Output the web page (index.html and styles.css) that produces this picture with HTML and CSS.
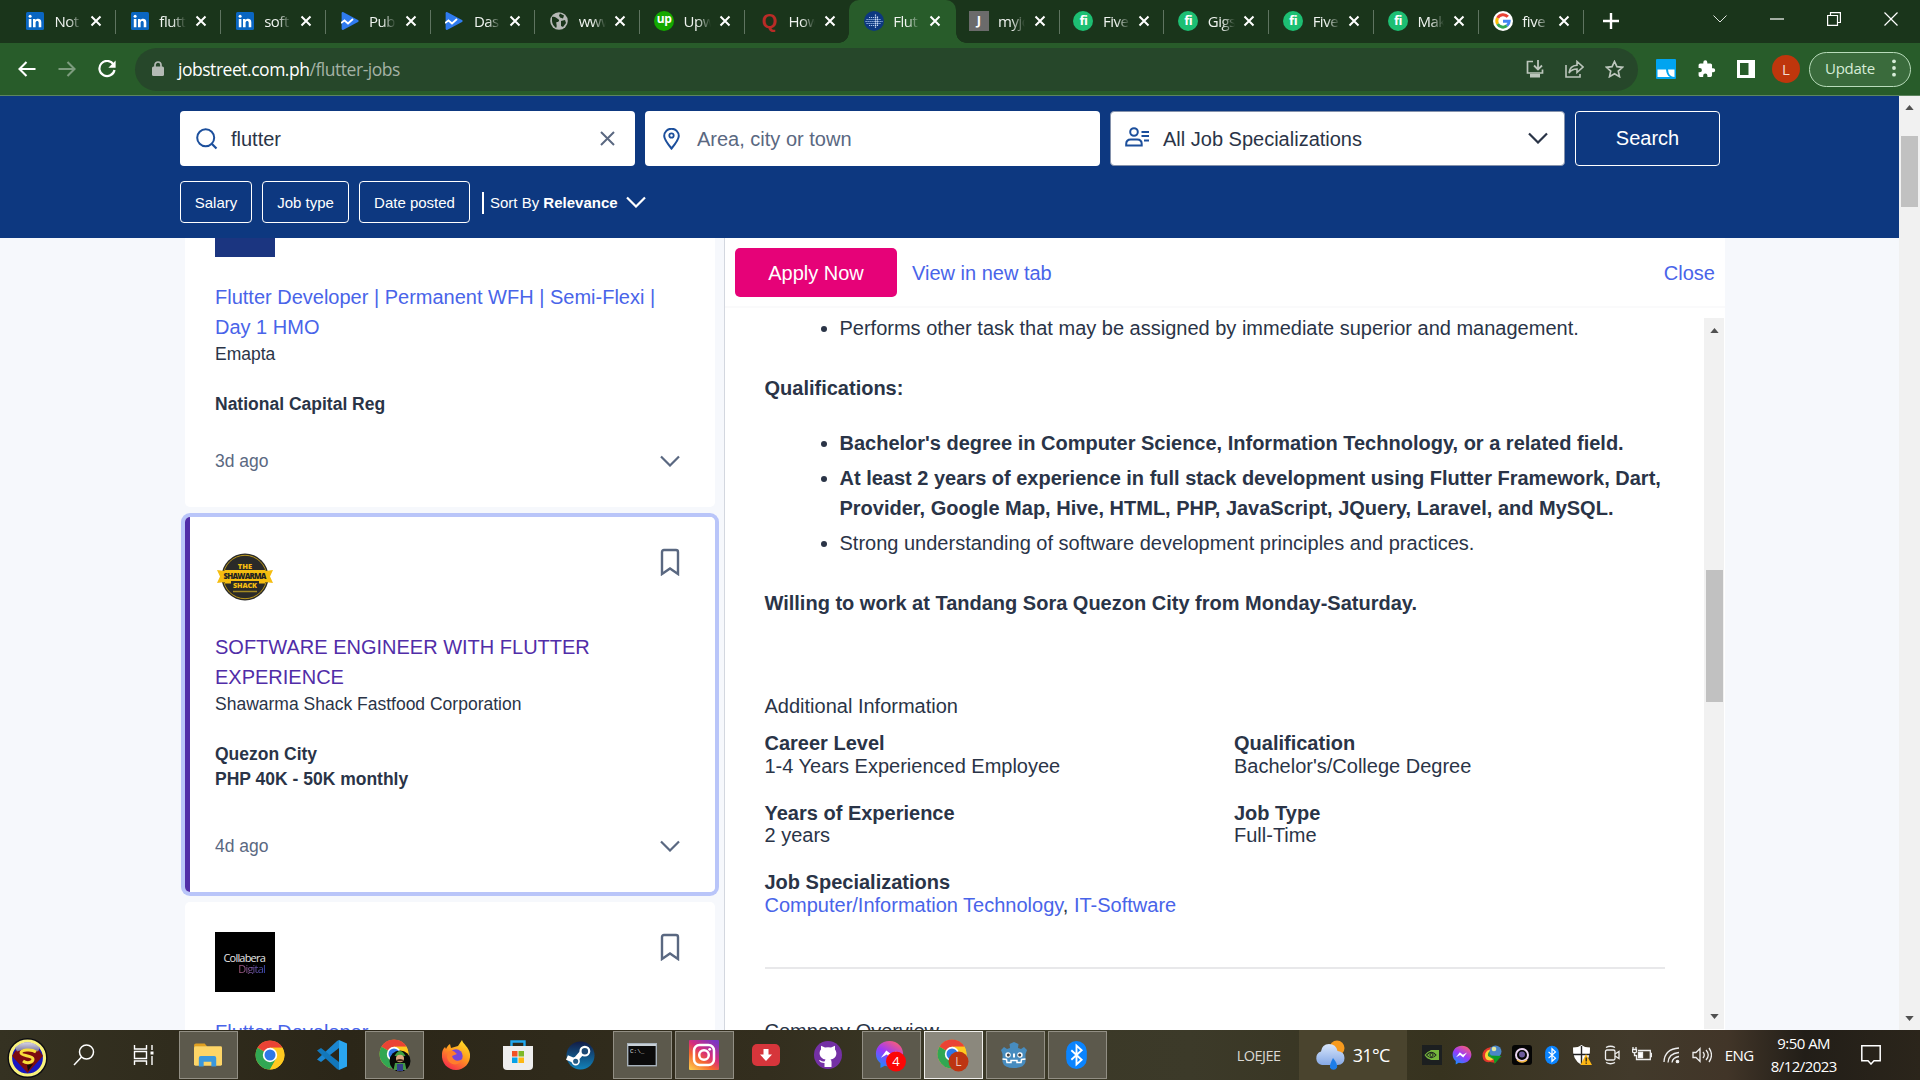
FILE: index.html
```html
<!DOCTYPE html>
<html lang="en">
<head>
<meta charset="utf-8">
<title>Flutter Jobs</title>
<link rel="stylesheet" href="styles.css">
</head>
<body>
<svg class="defs" width="0" height="0">
  <defs>
    <linearGradient id="fox" x1="0.8" y1="0" x2="0.2" y2="1"><stop offset="0" stop-color="#ffe226"/><stop offset=".45" stop-color="#ff9a1f"/><stop offset="1" stop-color="#f5234f"/></linearGradient>
    <linearGradient id="insta" x1="0.1" y1="1" x2="0.8" y2="0"><stop offset="0" stop-color="#fdc94c"/><stop offset=".35" stop-color="#f5662f"/><stop offset=".6" stop-color="#d62d7c"/><stop offset="1" stop-color="#7a36c4"/></linearGradient>
    <linearGradient id="msgr" x1="0.2" y1="1" x2="0.8" y2="0"><stop offset="0" stop-color="#1490ff"/><stop offset=".5" stop-color="#9a38fb"/><stop offset="1" stop-color="#ff6070"/></linearGradient>
    <linearGradient id="steam" x1="0" y1="0" x2="0" y2="1"><stop offset="0" stop-color="#131c45"/><stop offset="1" stop-color="#1183bb"/></linearGradient>
    <linearGradient id="cloud" x1="0" y1="0" x2="0" y2="1"><stop offset="0" stop-color="#d8e6fb"/><stop offset="1" stop-color="#86a9e6"/></linearGradient>
    <linearGradient id="shine" x1="0" y1="0" x2="0" y2="1"><stop offset="0" stop-color="#d9d6e6"/><stop offset="1" stop-color="#77749a"/></linearGradient>
    <symbol id="x" viewBox="0 0 12 12"><path d="M1.5 1.5l9 9m0-9l-9 9" stroke="currentColor" stroke-width="2" fill="none"/></symbol>
    <symbol id="in" viewBox="0 0 18 18"><rect width="18" height="18" rx="1.5" fill="#0a66c2"/><path d="M2.8 7h2.6v8.2H2.800zM7 7h2.500v1.200c1.400-2.200 5.800-2 5.800 2v5h-2.600v-4.500c0-2.400-3.100-2.200-3.100 0v4.500H7z" fill="#fff"/><circle cx="4.100" cy="4.300" r="1.500" fill="#fff"/></symbol>
    <symbol id="pub" viewBox="0 0 18 18"><path d="M2.500.3Q.6-.4.600 1.500v15q0 1.900 1.900 1.200L17 10q1.300-1 0-2z" fill="#2f7bf0"/><path d="M0 11l3.500-2.500 3.500 3 5-4.500" fill="none" stroke="#fff" stroke-width="1.800"/></symbol>
    <symbol id="globe" viewBox="0 0 18 18"><circle cx="9" cy="9" r="8.800" fill="#b5b8b5"/><path d="M2 5c3-1 4 1 6 2s1 3-1 3 1 4-1 6c-2-2-4-4-4-7zM10 1.500l4 2-1 3-3-1-1-2zM11 9l4-1 1 3-3 4-2-1z" fill="#1a351b"/></symbol>
    <symbol id="chrome" viewBox="0 0 48 48"><circle cx="24" cy="24" r="23" fill="#ffca20"/><path d="M24 24L4 12.500A23 23 0 0 1 44 12.500H24z" fill="#ea4335"/><path d="M4 12.500A23 23 0 0 0 24 47l10-17.500L24 24z" fill="#31a753"/><path d="M44 12.500H24V24l10 5.500L24 47A23 23 0 0 0 44 12.500z" fill="#ffca20"/><circle cx="24" cy="24" r="11.500" fill="#fff"/><circle cx="24" cy="24" r="8.800" fill="#2f78e8"/></symbol>
    <symbol id="chev" viewBox="0 0 20 12"><path d="M1 1.500l9 9 9-9" fill="none" stroke="currentColor" stroke-width="2.200"/></symbol>
    <symbol id="mark" viewBox="0 0 20 28"><path d="M2 26V4Q2 2 4 2h12q2 0 2 2v22l-8-5.500z" fill="none" stroke="currentColor" stroke-width="2.400"/></symbol>
    <symbol id="bt" viewBox="0 0 24 32"><rect x="1" y="1" width="22" height="30" rx="11" fill="#0a84ff"/><path d="M6.500 11l11 10-5.500 5V6l5.500 5-11 10" fill="none" stroke="#fff" stroke-width="2"/></symbol>
    <symbol id="messenger" viewBox="0 0 32 32"><path d="M16 1C7 1 1 7.200 1 15.300c0 4.500 1.800 8 5 10.400V31l4.800-2.600c1.600.5 3.400.7 5.200.7 9 0 15-6.200 15-13.800S25 1 16 1z" fill="url(#msgr)"/><path d="M6.500 19.500l6-8 5 4 6.500-3.500-6 8-5-4z" fill="#fff"/></symbol>
    <symbol id="wv" viewBox="0 0 10 6"><path d="M0 6L5 0l5 6z" fill="#505050"/></symbol>
  </defs>
</svg>

<div class="tabs">
  <div class="tab"><svg class="fav"><use href="#in"/></svg><span>Not</span><svg class="tx"><use href="#x"/></svg></div>
  <div class="tab"><svg class="fav"><use href="#in"/></svg><span>flutt</span><svg class="tx"><use href="#x"/></svg></div>
  <div class="tab"><svg class="fav"><use href="#in"/></svg><span>soft</span><svg class="tx"><use href="#x"/></svg></div>
  <div class="tab"><svg class="fav"><use href="#pub"/></svg><span>Pub</span><svg class="tx"><use href="#x"/></svg></div>
  <div class="tab"><svg class="fav"><use href="#pub"/></svg><span>Das</span><svg class="tx"><use href="#x"/></svg></div>
  <div class="tab"><svg class="fav"><use href="#globe"/></svg><span>www</span><svg class="tx"><use href="#x"/></svg></div>
  <div class="tab"><b class="fav dot up">up</b><span>Upw</span><svg class="tx"><use href="#x"/></svg></div>
  <div class="tab nosep"><b class="fav quora">Q</b><span>How</span><svg class="tx"><use href="#x"/></svg></div>
  <div class="tab active nosep"><svg class="fav" viewBox="0 0 20 20"><circle cx="10" cy="10" r="10" fill="#0d3880"/><path d="M2.500 8.500H17M1.500 10.500H18.500M2.500 12.500H17M5 6.500h9M5 14.500h9" stroke="#a9c3ef" stroke-width="1.100" stroke-dasharray="1.200 .8"/><path d="M11.500 3.500v14M13.500 5.500v10" stroke="#dbe6fa" stroke-width="1.200" stroke-dasharray="1.200 .8"/></svg><span>Flut</span><svg class="tx"><use href="#x"/></svg></div>
  <div class="tab"><b class="fav jay">J</b><span>myjo</span><svg class="tx"><use href="#x"/></svg></div>
  <div class="tab"><b class="fav dot fi">fi</b><span>Five</span><svg class="tx"><use href="#x"/></svg></div>
  <div class="tab"><b class="fav dot fi">fi</b><span>Gigs</span><svg class="tx"><use href="#x"/></svg></div>
  <div class="tab"><b class="fav dot fi">fi</b><span>Five</span><svg class="tx"><use href="#x"/></svg></div>
  <div class="tab"><b class="fav dot fi">fi</b><span>Mak</span><svg class="tx"><use href="#x"/></svg></div>
  <div class="tab"><svg class="fav big" viewBox="0 0 20 20"><circle cx="10" cy="10" r="10" fill="#fff"/><g fill="none" stroke-width="3"><path d="M14.800 5.800A6.200 6.200 0 0 0 4.600 7" stroke="#ea4335"/><path d="M4.600 7a6.200 6.200 0 0 0 0 6" stroke="#fbbc05"/><path d="M4.600 13a6.200 6.200 0 0 0 9.400 1.700" stroke="#34a853"/><path d="M14 14.700a6.200 6.200 0 0 0 2.200-4.500H10" stroke="#4285f4"/></g></svg><span>five</span><svg class="tx"><use href="#x"/></svg></div>
  <svg class="plus" viewBox="0 0 16 16"><path d="M8 0v16M0 8h16" stroke="#fff" stroke-width="2.400"/></svg>
  <div class="winctl">
    <svg width="14" height="8" viewBox="0 0 14 8"><path d="M.5.5L7 7 13.500.5" fill="none" stroke="#dfe5df"/></svg>
    <svg width="14" height="14" viewBox="0 0 14 14"><path d="M0 7h14" stroke="#fff" stroke-width="1.200"/></svg>
    <svg width="14" height="14" viewBox="0 0 14 14"><path d="M.6 3.500h9.900v9.900H.6zM3.500 3V.6h9.900v9.900H11" fill="none" stroke="#fff" stroke-width="1.200"/></svg>
    <svg width="14" height="14" viewBox="0 0 14 14"><path d="M.5.5l13 13m0-13l-13 13" stroke="#fff" stroke-width="1.200"/></svg>
  </div>
</div>

<div class="toolbar">
  <svg width="18" height="16" viewBox="0 0 18 16"><path d="M17.500 8H2M8.500 1L1.500 8l7 7" fill="none" stroke="#fff" stroke-width="2.100"/></svg>
  <svg width="18" height="16" viewBox="0 0 18 16"><path d="M.5 8H16M9.500 1l7 7-7 7" fill="none" stroke="#7d9c7e" stroke-width="2.100"/></svg>
  <svg width="18" height="18" viewBox="0 0 18 18"><path d="M15.500 4.500A7.600 7.600 0 1 0 16.500 10" fill="none" stroke="#fff" stroke-width="2.200"/><path d="M17.600.5v7.200h-7.200z" fill="#fff"/></svg>
  <div class="omni">
    <svg width="12" height="16" viewBox="0 0 12 16"><rect y="5.500" width="12" height="9.500" rx="1.500" fill="#b4bab5"/><path d="M3 6V4a3 3 0 0 1 6 0v2" fill="none" stroke="#b4bab5" stroke-width="1.700"/></svg>
    <div class="url">jobstreet.com.ph<i>/flutter-jobs</i></div>
    <svg width="18" height="18" viewBox="0 0 18 18"><path d="M7 1.500H1.500V13h15V9.500" fill="none" stroke="#bcc6bc" stroke-width="1.700"/><path d="M4 14h10v3.500H4z" fill="#bcc6bc"/><path d="M12 0v9M8 5.500l4 4 4-4" fill="none" stroke="#bcc6bc" stroke-width="1.800"/></svg>
    <svg width="19" height="18" viewBox="0 0 19 18"><path d="M1 5v12h14v-3M4 13c.5-5 3.500-7.500 8-7.700V1.500L18 7l-6 5.500V9C8.500 9 6 10 4 13z" fill="none" stroke="#bcc6bc" stroke-width="1.600"/></svg>
    <svg width="19" height="18" viewBox="0 0 19 18"><path d="M9.500 1.500l2.400 5.200 5.600.6-4.200 3.800 1.200 5.600-5-2.900-5 2.900 1.200-5.600L1.500 7.300l5.600-.6z" fill="none" stroke="#bcc6bc" stroke-width="1.700"/></svg>
  </div>
  <svg class="e1" width="20" height="20" viewBox="0 0 20 20"><rect width="20" height="20" rx="1" fill="#00a4f0"/><path d="M1.500 10.500H10q.5 6 4 7.500H1.500zM12 10.500h6.500V18q-6 0-6.500-7.500z" fill="#fff"/></svg>
  <svg class="e2" width="19" height="20" viewBox="0 0 24 24"><path d="M20.500 11H19V7a2 2 0 0 0-2-2h-4V3.500a2.500 2.500 0 0 0-5 0V5H4a2 2 0 0 0-2 2v3.800h1.500a2.700 2.700 0 0 1 0 5.400H2V20a2 2 0 0 0 2 2h3.800v-1.500a2.700 2.700 0 0 1 5.400 0V22H17a2 2 0 0 0 2-2v-4h1.500a2.500 2.500 0 0 0 0-5z" fill="#fff"/></svg>
  <svg class="e3" width="18" height="18" viewBox="0 0 18 18"><path d="M0 0h18v18H0zM3 3v12h8.500V3z" fill="#fff" fill-rule="evenodd"/></svg>
  <div class="avatar">L</div>
  <div class="update">Update<svg width="4" height="18" viewBox="0 0 4 18"><circle cx="2" cy="2.300" r="1.900" fill="#d6ecd7"/><circle cx="2" cy="9" r="1.900" fill="#d6ecd7"/><circle cx="2" cy="15.700" r="1.900" fill="#d6ecd7"/></svg></div>
</div>

<div class="page">
  <div class="content">
    <header class="search">
      <div class="fields">
        <div class="field"><svg width="22" height="22" viewBox="0 0 22 22"><circle cx="9.700" cy="9.700" r="8.500" fill="none" stroke="#1c4f9c" stroke-width="2"/><path d="M16 16l4.500 4.500" stroke="#1c4f9c" stroke-width="2.200"/></svg><span class="val">flutter</span><svg class="clear" width="15" height="15" viewBox="0 0 15 15"><path d="M1 1l13 13M14 1L1 14" stroke="#5a6881" stroke-width="2"/></svg></div>
        <div class="field loc"><svg width="17" height="22" viewBox="0 0 17 22"><path d="M8.500 20.500C4 15 1.200 11.500 1.200 8a7.300 7.300 0 0 1 14.600 0c0 3.500-2.800 7-7.300 12.500z" fill="none" stroke="#1c4f9c" stroke-width="2"/><circle cx="8.500" cy="7.500" r="2.200" fill="none" stroke="#1c4f9c" stroke-width="1.800"/></svg><span class="val hint">Area, city or town</span></div>
        <div class="field spec"><svg width="25" height="20" viewBox="0 0 25 20"><g fill="none" stroke="#1c4f9c" stroke-width="2"><circle cx="9" cy="5" r="3.800"/><path d="M1.200 18.500v-1.500q0-4.500 4.500-4.500h6.500q4.500 0 4.500 4.500v1.500zM16.500 5H24M16.500 9H24M19 13.500h5"/></g></svg><span class="val">All Job Specializations</span><svg width="20" height="12" class="dark"><use href="#chev"/></svg></div>
        <div class="go">Search</div>
      </div>
      <div class="filters">
        <span class="pill p1">Salary</span><span class="pill p2">Job type</span><span class="pill p3">Date posted</span><i class="bar"></i><span class="sort">Sort By <b>Relevance</b></span><svg width="20" height="12"><use href="#chev"/></svg>
      </div>
    </header>
    <main>
      <div class="list">
        <article class="card c1"><div class="logo navy"></div><h3>Flutter Developer | Permanent WFH | Semi-Flexi | Day 1 HMO</h3><p>Emapta</p><div class="meta"><b>National Capital Reg</b></div><footer>3d ago<svg width="20" height="12"><use href="#chev"/></svg></footer></article>
        <article class="card c2"><div class="top"><svg class="logo" viewBox="0 0 60 60"><circle cx="30" cy="30" r="23.500" fill="#2a2a28"/><circle cx="30" cy="30" r="21.700" fill="none" stroke="#b9961c" stroke-width="1"/><path d="M2 23l8 1V23h40v1l8-1-3 6.500 3 6.500-8-1v1.500H10V35l-8 1 3-6.500z" fill="#f5bd10"/><rect x="16" y="34" width="28" height="7" fill="#2a2a28"/><g font-family="Open Sans, sans-serif" font-weight="800" text-anchor="middle"><text x="30" y="22" font-size="7.500" fill="#f5bd10">THE</text><text x="30" y="32" font-size="7.800" fill="#222" textLength="43">SHAWARMA</text><text x="30" y="40.500" font-size="7.200" fill="#f5bd10" textLength="24">SHACK</text></g><path d="M18 44.500h24" stroke="#a38922" stroke-width="1.500"/></svg><svg class="mark" width="20" height="28"><use href="#mark"/></svg></div><h3>SOFTWARE ENGINEER WITH FLUTTER EXPERIENCE</h3><p>Shawarma Shack Fastfood Corporation</p><div class="meta"><b>Quezon City</b><b>PHP 40K - 50K monthly</b></div><footer>4d ago<svg width="20" height="12"><use href="#chev"/></svg></footer></article>
        <article class="card c3"><div class="top"><div class="logo black"><span>Collabera</span><em>Digital</em></div><svg class="mark" width="20" height="28"><use href="#mark"/></svg></div><h3>Flutter Developer</h3></article>
      </div>
      <section class="detail">
        <div class="dhead"><span class="apply">Apply Now</span><a>View in new tab</a><a class="close">Close</a></div>
        <div class="dbody">
          <div class="text">
            <ul><li>Performs other task that may be assigned by immediate superior and management.</li></ul>
            <p class="bold q">Qualifications:</p>
            <ul><li class="bold">Bachelor's degree in Computer Science, Information Technology, or a related field.</li><li class="bold">At least 2 years of experience in full stack development using Flutter Framework, Dart, Provider, Google Map, Hive, HTML, PHP, JavaScript, JQuery, Laravel, and MySQL.</li><li>Strong understanding of software development principles and practices.</li></ul>
            <p class="bold w">Willing to work at Tandang Sora Quezon City from Monday-Saturday.</p>
            <h4>Additional Information</h4>
            <div class="info">
              <div><b>Career Level</b>1-4 Years Experienced Employee</div><div><b>Qualification</b>Bachelor's/College Degree</div>
              <div><b>Years of Experience</b>2 years</div><div><b>Job Type</b>Full-Time</div>
              <div><b>Job Specializations</b><span><a>Computer/Information Technology</a>, <a>IT-Software</a></span></div>
            </div>
            <h4 class="co">Company Overview</h4>
          </div>
          <div class="sb inner"><svg><use href="#wv"/></svg><i></i><svg class="dn"><use href="#wv"/></svg></div>
        </div>
      </section>
    </main>
  </div>
  <div class="sb outer"><svg><use href="#wv"/></svg><i></i><svg class="dn"><use href="#wv"/></svg></div>
</div>

<div class="taskbar">
  <div class="start"><svg width="41" height="40" viewBox="0 0 41 40"><circle cx="20.500" cy="20" r="20" fill="#0c0c12"/><circle cx="20.500" cy="20" r="17" fill="#1717c0" stroke="#f8f27c" stroke-width="3.200"/><path d="M10 11h21l5 7-15.500 17L5 18z" fill="#7c0d10"/><path d="M8 9.500Q20.500-1 33 9.500l-2 4q-10-5-21 0z" fill="url(#shine)"/><path d="M29 14c-5-3.500-15-2-15 1s12 2.500 12 6-6 5-10 2" fill="none" stroke="#f7de3a" stroke-width="3"/><path d="M20 27l1 6 5-7z" fill="#140a0a"/></svg></div>
  <div class="find"><svg width="22" height="22" viewBox="0 0 22 22"><circle cx="13.500" cy="8" r="7" fill="none" stroke="#fff" stroke-width="1.500"/><path d="M8.500 13L1 21" stroke="#fff" stroke-width="1.500"/></svg></div>
  <div class="view"><svg width="22" height="20" viewBox="0 0 22 20"><path d="M1.500 0v4h12V0M1.500 20v-4h12v4M1.500 6.500h12v7h-12zM19 0v5M19 11v9" fill="none" stroke="#fff" stroke-width="1.400"/><path d="M17.500 6.500h3v3h-3z" fill="#fff"/></svg></div>
  <div class="app on"><svg width="28" height="25" viewBox="0 0 29 25"><path d="M0 2q0-2 2-2h9l3 3.500H0z" fill="#e0a021"/><rect y="3" width="29" height="20" rx="1.500" fill="#fdd567"/><path d="M5 24V15q0-2 2-2h14q2 0 2 2v9h-5v-5h-8v5z" fill="#3a98dd"/></svg></div>
  <div class="app"><svg width="30" height="30"><use href="#chrome"/></svg></div>
  <div class="app"><svg width="30" height="30" viewBox="0 0 30 30"><path d="M22 0l8 3.500v23L22 30z" fill="#2aa5f0"/><path d="M22 0v8L4 22 0 19.500 20 1z" fill="#1b86d0"/><path d="M22 30v-8L4 8 0 10.500 20 29z" fill="#1277bb"/></svg></div>
  <div class="app on"><svg width="34" height="34" viewBox="0 0 34 34"><use href="#chrome" x="2" y="1" width="30" height="30"/><ellipse cx="23" cy="23" rx="10.500" ry="10.500" fill="#080a08"/><path d="M17.500 18q5.500-10 11 0z" fill="#3da042"/><ellipse cx="23" cy="20.500" rx="4" ry="3.700" fill="#dba97e"/><path d="M19.500 22q3.500-2 7 0v1.300h-7z" fill="#442718"/><path d="M18 25h10l1.500 7h-13z" fill="#449746"/><path d="M20 26h6v7h-6z" fill="#33418b"/></svg></div>
  <div class="app"><svg width="30" height="30" viewBox="0 0 30 30"><path d="M17 6l4-6c1 4 7 7 8 14 1 9-6 16-14 16S0 23 1 14c0-3 1-5 3-7l1 2c1-2 2-4 4-5l1 4z" fill="url(#fox)"/><circle cx="15" cy="16" r="6.700" fill="#7545d9"/><path d="M7 12c4-3 7 0 9 2l-5 2c1 5 7 6 10 3-2 8-14 7-15-2z" fill="#ff7d2c"/></svg></div>
  <div class="app"><svg width="30" height="30" viewBox="0 0 30 30"><path d="M8.500 7V1.500h13V7" fill="none" stroke="#20a8ef" stroke-width="2.400"/><path d="M0 6h30v20q0 4-4 4H4q-4 0-4-4z" fill="#eee"/><path d="M9 11h5.500v5.500H9z" fill="#f05125"/><path d="M15.500 11H21v5.500h-5.500z" fill="#7db928"/><path d="M9 17.500h5.500V23H9z" fill="#05a2e8"/><path d="M15.500 17.500H21V23h-5.500z" fill="#fdb813"/></svg></div>
  <div class="app"><svg width="29" height="29" viewBox="0 0 30 30"><circle cx="15" cy="15" r="14.500" fill="url(#steam)"/><path d="M1 17l8 3.500 7-8" fill="none" stroke="#fff" stroke-width="5"/><circle cx="19.500" cy="10.500" r="4.500" fill="#1c4873" stroke="#fff" stroke-width="2.300"/><circle cx="10" cy="21" r="3.500" fill="#245b84" stroke="#fff" stroke-width="1.700"/></svg></div>
  <div class="app on"><svg width="30" height="24" viewBox="0 0 30 24"><rect x=".7" y=".7" width="28.600" height="22" fill="#0b0b0b" stroke="#a7b2bb" stroke-width="1.400"/><path d="M1 1h28v2H1z" fill="#c8d0d6"/><text x="3" y="10" font-size="6" fill="#ddd" font-family="Liberation Mono, monospace">C:\_</text></svg></div>
  <div class="app on"><svg width="30" height="30" viewBox="0 0 30 30"><rect width="30" height="30" rx="1" fill="url(#insta)"/><g fill="none" stroke="#fff" stroke-width="2.500"><rect x="5" y="5" width="20" height="20" rx="5.500"/><circle cx="15" cy="15" r="4.800"/></g><circle cx="20.700" cy="9.300" r="1.400" fill="#fff"/></svg></div>
  <div class="app"><svg width="28" height="22" viewBox="0 0 28 22"><rect width="28" height="22" rx="5" fill="#d6353b"/><path d="M11.500 5h5v5.500H20L14 17l-6-6.500h3.500z" fill="#fff"/></svg></div>
  <div class="app"><svg width="28" height="28" viewBox="0 0 28 28"><circle cx="14" cy="14" r="14" fill="#7430a5"/><path d="M10.500 26v-4c-3-.2-5-1-5.500-3 2 0 2 2 5.500 1.500l1-2C5 17.500 4.500 11 7 8.500V4.700l4 1.800q3-.7 6 0l4-1.800v3.800c2.500 3 2 9-4.500 10 1.500 1 1 4 1 7.500z" fill="#fff"/></svg></div>
  <div class="app on"><svg width="34" height="34" viewBox="0 0 34 34"><use href="#messenger" x="2" y="2" width="29" height="29"/><circle cx="23" cy="23.500" r="10" fill="#fb0606"/><text x="23" y="28" font-size="13" fill="#fff" text-anchor="middle" font-family="Open Sans, sans-serif">4</text></svg></div>
  <div class="app cur"><svg width="34" height="34" viewBox="0 0 34 34"><use href="#chrome" x="2" y="1" width="30" height="30"/><circle cx="23.500" cy="23.500" r="10" fill="#bd3512"/><text x="23.500" y="28" font-size="12" fill="#e8c7bc" text-anchor="middle" font-family="Open Sans, sans-serif">L</text></svg></div>
  <div class="app on"><svg width="28" height="28" viewBox="0 0 28 28"><path d="M1 9l3-3 3 2 3-1-.5-4L14 1l4.500 2L18 7l3 1 3-2 3 3-1.500 4v8Q24 27 14 27T2.500 21v-8z" fill="#478cbf"/><path d="M2.500 18l4 .5.500 3h4v-2h6v2h4l.500-3 4-.5" fill="none" stroke="#fff" stroke-width="1.500"/><circle cx="8" cy="14" r="2.700" fill="#fff"/><circle cx="20" cy="14" r="2.700" fill="#fff"/><circle cx="8.300" cy="14" r="1.500" fill="#414042"/><circle cx="19.700" cy="14" r="1.500" fill="#414042"/><path d="M14 12.500v4" stroke="#fff" stroke-width="2"/></svg></div>
  <div class="app on"><svg width="23" height="30"><use href="#bt"/></svg></div>
  <div class="tray">
    <span class="user">LOEJEE</span>
    <div class="weather"><svg width="32" height="32" viewBox="0 0 32 32"><circle cx="23" cy="9" r="7.500" fill="#f79a1e"/><path d="M8 26a7 7 0 0 1-1-13.500Q8 5 15 5t8.500 7q7 .5 7 7t-7 7z" fill="url(#cloud)"/><path d="M19 19q5 6 4 9.500a3.800 3.800 0 0 1-7 0q-.5-3 3-9.500z" fill="#1d7de8"/></svg>31°C</div>
    <div class="icons">
      <svg viewBox="0 0 20 20"><rect width="20" height="20" fill="#1c1f20"/><path d="M2.500 10q3-4 6-4.500V5H17v10H8.500v-.5Q5 14 2.500 10z" fill="#76b83c"/><path d="M4.500 10q5-5.500 9.500 0-4.500 5.500-9.500 0z" fill="none" stroke="#1c1f20" stroke-width="1.100"/><circle cx="9.500" cy="10" r="1.600" fill="none" stroke="#1c1f20"/></svg>
      <svg><use href="#messenger"/></svg>
      <svg viewBox="0 0 20 20"><path d="M9 2Q0 4 .5 11T8 17l6 1-4-6z" fill="#e2362c"/><path d="M9 4Q2.500 6 3 11t6 4.500l4-2z" fill="#fbd535"/><path d="M10 5Q5 7 6 11l5 3z" fill="#1fa03a"/><circle cx="13.500" cy="6.500" r="6" fill="#4a86c8"/><circle cx="12" cy="4" r="2.300" fill="#e2e6a0"/><path d="M8 10.500l11.500.5-7 8-.5-4.500z" fill="#0c9b22"/></svg>
      <svg viewBox="0 0 20 20"><rect width="20" height="20" rx="3" fill="#050505"/><circle cx="10" cy="10" r="6" fill="none" stroke="#e9d3ef" stroke-width="2"/><circle cx="10" cy="9.500" r="3" fill="#6d5a9b"/><path d="M5 15q5 4 10 0" fill="none" stroke="#f4b942" stroke-width="1.500"/></svg>
      <svg><use href="#bt"/></svg>
      <svg viewBox="0 0 20 20"><path d="M9.500 0q3 2.500 8.500 2.500 1 12-8.500 17.500Q0 14.500 1 2.500 6.500 2.500 9.500 0z" fill="#fff"/><path d="M9.500 1v18M1 9.500h17" stroke="#222" stroke-width="1.400"/><path d="M14 9l6 11H8.500z" fill="#fdb714"/><path d="M14.200 12.500v4M14.200 17.500v1.300" stroke="#222" stroke-width="1.300"/></svg>
      <svg viewBox="0 0 20 20" class="ln"><rect x="3.500" y="5" width="9.500" height="10" rx="1.500"/><path d="M13 9l4-2.500v7L13 11M4 2.500Q8.500 0 13 2.500M4 17.500q4.500 2.500 9 0"/></svg>
      <svg viewBox="0 0 20 20" class="ln"><path d="M6 5.500h12.300v9H4.500V10"/><path d="M18.500 8.500h1v3h-1M1 2v2M4 2v2M.5 4.500h4V7q-2 1.500-4 0zM2.500 8v2.500h2"/><path d="M6.500 7.500h4v5h-4z" fill="#fff"/></svg>
      <svg viewBox="0 0 20 20" class="ln"><path d="M2 17Q2.500 4 17 3M6 17.500Q6.500 8.500 17 7.500M10 17.500q.5-5 7-6"/><circle cx="15.500" cy="16.500" r="1.200" fill="#fff"/></svg>
      <svg viewBox="0 0 20 20" class="ln"><path d="M1 7.500h3l4-4v13l-4-4H1zM11 7q2.500 3 0 6M14 5q4.500 5 0 10M17 3q5 7 0 14"/></svg>
    </div>
    <span class="lang">ENG</span>
    <div class="clock"><span>9:50 AM</span><span>8/12/2023</span></div>
    <svg class="note" width="20" height="20" viewBox="0 0 20 20"><path d="M.8.800h18.400v15H13l-3 3.200-3-3.200H.8z" fill="none" stroke="#fff" stroke-width="1.500"/></svg>
  </div>
</div>
</body>
</html>
```
FILE: styles.css
```css
* { box-sizing: border-box; }
body { margin: 0; width: 1920px; height: 1080px; overflow: hidden; display: flex; flex-direction: column; font-family: "Liberation Sans", Arial, sans-serif; }
.defs { position: absolute; }
svg { display: block; flex: none; }
h3, h4, p, ul { margin: 0; padding: 0; font-weight: 400; }

.tabs { height: 43px; flex: none; background: #1a351b; display: flex; padding-left: 11px; font-family: "Open Sans", sans-serif; font-size: 15px; letter-spacing: -.5px; color: #f0f4f0; }
.tab { width: 104.850px; flex: none; height: 43px; display: flex; align-items: center; padding: 0 0 2px 15px; background: linear-gradient(#5f7460, #5f7460) no-repeat 104px 10px / 1px 24px; }
.tab.nosep { background: none; }
.tab span { width: 27px; margin-left: 10.500px; overflow: hidden; white-space: nowrap; -webkit-mask-image: linear-gradient(90deg, #000 50%, transparent); mask-image: linear-gradient(90deg, #000 50%, transparent); }
.fav { width: 18px; height: 18px; flex: none; }
b.fav { text-align: center; line-height: 18px; color: #fff; font-size: 13px; letter-spacing: -.5px; }
.dot, .jay, .active .fav, .fav.big { width: 20px; height: 20px; margin: 0 -1px; }
.dot { border-radius: 50%; }
.up { background: #14a800; font-size: 12px !important; line-height: 16px !important; }
.fi { background: #1dbf73; }
.jay { background: #6b6b6b; }
.quora { color: #b92b27 !important; font-family: "Liberation Sans"; font-size: 20px !important; }
.tx { width: 12px; height: 12px; margin-left: 8.500px; color: #fff; }
.tab.active { position: relative; background: #285c2a; border-radius: 10px 10px 0 0; width: 106.850px; margin: 0 -1px; padding-left: 16px; }
.tab.active::before, .tab.active::after { content: ""; position: absolute; bottom: 0; width: 10px; height: 10px; }
.tab.active::before { left: -10px; background: radial-gradient(circle at 0 0, transparent 9.500px, #285c2a 10px); }
.tab.active::after { right: -10px; background: radial-gradient(circle at 100% 0, transparent 9.500px, #285c2a 10px); }
.plus { width: 16px; height: 16px; margin: 13px 0 0 19px; }
.winctl { margin-left: auto; display: flex; align-items: center; gap: 43px; height: 37px; padding-right: 22px; }

.toolbar { height: 53px; flex: none; background: #285c2a; border-bottom: 1px solid #5d855f; display: flex; align-items: center; padding: 0 11px 0 18px; gap: 22px; font-family: "Open Sans", sans-serif; }
.omni { width: 1503px; flex: none; height: 43px; margin-left: -3px; border-radius: 22px; background: #26472a; display: flex; align-items: center; padding: 0 14px 0 17px; gap: 21px; }
.url { flex: 1; margin-left: -7px; font-size: 17.500px; letter-spacing: -.47px; color: #fff; }
.url i { font-style: normal; color: #a4b2a5; }
.toolbar svg.e1 { margin-left: -4px; }
.toolbar svg.e2 { margin-left: -1px; }
.toolbar svg.e3 { margin-left: -1px; }
.avatar { flex: none; width: 28px; height: 28px; border-radius: 50%; background: #bf360c; color: #f3dcd2; font-size: 15px; line-height: 28px; text-align: center; margin: 0 -5px; }
.update { flex: none; width: 102px; height: 35px; margin-left: -8px; border: 1.500px solid #b9dcbb; border-radius: 18px; background: #3a6b3c; color: #d6ecd7; font-size: 15px; display: flex; align-items: center; justify-content: space-between; padding: 0 14px 0 15px; letter-spacing: -.25px; line-height: 30px; padding-bottom: 2px; }

.page { height: 934px; flex: none; display: flex; background: #f6f8fc; overflow: hidden; }
.content { width: 1899px; }
.search { height: 142px; background: #0d3880; padding: 15px 0 0 180px; color: #fff; position: relative; z-index: 1; }
.fields { display: flex; gap: 10px; font-size: 20px; }
.field { width: 455px; height: 55px; background: #fff; border-radius: 4px; display: flex; align-items: center; padding: 0 20px 0 16px; color: #2a3447; }
.val { flex: 1; margin-left: 13px; padding-top: 1px; }
.loc { padding-left: 18px; }
.loc .val { margin-left: 17px; }
.hint { color: #5a6881; }
.spec { border: 1.500px solid #8592ac; padding: 0 16px 4px 14px; }
.spec .val { padding-top: 5px; }
.spec svg { margin-top: 2px; }
.spec svg:first-child { margin-top: 0; }
.dark { color: #2a3447; }
.go { width: 145px; height: 55px; border: 1.500px solid #fff; border-radius: 4px; text-align: center; line-height: 53px; }
.filters { display: flex; align-items: center; margin-top: 15px; height: 42px; font-size: 15px; }
.pill { height: 42px; border: 1.500px solid #fff; border-radius: 4px; line-height: 41px; text-align: center; margin-right: 10px; }
.p1 { width: 72px; }
.p2 { width: 87px; }
.p3 { width: 111px; }
.bar { width: 2px; height: 22px; background: #fff; margin: 2px 6px 0 2px; }
.sort { margin-right: 8px; }

main { display: flex; height: 792px; padding-left: 185px; overflow: hidden; }
.list { width: 539px; display: flex; flex-direction: column; gap: 10px; margin-top: -71px; color: #2a3447; }
.card { position: relative; width: 530px; flex: none; background: #fff; border-radius: 5px; padding: 30px 35px 0 30px; }
.c1 { height: 340px; }
.c2 { height: 375px; box-shadow: 0 0 0 4px #b9c5f9; background: linear-gradient(90deg, #512da8 5px, #fff 5px); }
.c3 { height: 340px; }
.top { display: flex; justify-content: space-between; }
.mark { margin-top: 1px; color: #5a6881; }
.logo { width: 60px; height: 60px; }
.navy { background: #1b3580; }
.black { background: #000; color: #e7e7e7; font-family: "Open Sans", sans-serif; font-size: 11px; letter-spacing: -.8px; line-height: 11px; padding: 20px 10px 0 6px; text-align: right; }
.black span, .black em { display: block; font-style: normal; }
.black em { margin-left: 16px; background: linear-gradient(90deg, #b5607c, #3f4cb8); -webkit-background-clip: text; background-clip: text; color: transparent; }
.card h3 { font-size: 20px; line-height: 30px; margin-top: 24.500px; color: #4964e9; }
.card.c2 h3 { color: #512da8; }
.card p { font-size: 17.500px; line-height: 24px; }
.meta { height: 91px; padding-top: 26.500px; display: flex; flex-direction: column; font-size: 17.500px; line-height: 25px; }
.c1 .meta { height: 66px; }
.card footer { display: flex; justify-content: space-between; align-items: center; font-size: 17.500px; line-height: 30px; color: #5a6881; margin-top: 24.500px; }
.card.c1 footer { margin-top: 14.500px; }

.detail { width: 1001px; background: #fff; border-left: 1px solid #d3d7df; color: #2a3447; font-size: 20px; }
.detail a { color: #4964e9; }
.dhead { height: 70px; display: flex; align-items: center; padding: 1px 10px 0 10px; border-bottom: 2px solid #fafafb; }
.apply { width: 162px; height: 49px; line-height: 50px; border-radius: 5px; background: #e60278; color: #fff; text-align: center; margin-right: 15px; }
.dhead a { padding-top: 1px; }
.close { margin-left: auto; }
.dbody { height: 722px; display: flex; justify-content: space-between; }
.text { width: 900px; margin-left: 39.500px; padding-top: 5px; }
.text ul { padding-left: 75px; }
.text li { line-height: 30px; margin-bottom: 5px; }
.bold { font-weight: 700; }
.text p { line-height: 30px; }
.q { margin: 30px 0 25px; }
.w { margin-top: 30px; }
.text h4 { font-size: 20px; line-height: 24px; margin-top: 76px; }
.info { display: grid; grid-template-columns: 469.500px 1fr; row-gap: 24.500px; margin-top: 14px; height: 237px; align-content: start; line-height: 22.500px; border-bottom: 2px solid #e8e8ea; }
.info b { display: block; }
.text h4.co { margin-top: 50px; }

.sb { background: #f1f1f1; display: flex; flex-direction: column; align-items: center; }
.sb svg { width: 9px; height: 5px; }
.sb i { background: #c1c1c1; }
.sb svg.dn { transform: rotate(180deg); margin-top: auto; }
.inner { width: 20px; height: 711px; margin: 10px 1px 0 0; padding: 10px 0 10px; }
.inner i { width: 17px; height: 132px; margin-top: 237px; }
.outer { width: 21px; padding: 9px 0 9px; }
.outer i { width: 17px; height: 71px; margin-top: 26px; }

.taskbar { height: 50px; flex: none; background: linear-gradient(90deg, #353222 0, #2b2618 18%, #332e1e 40%, #3a3826 50%, #3c3a29 62%, #37331f 75%, #423a2b 85%, #413528 90%, #221e18 94%, #2b251b 100%); display: flex; align-items: center; color: #fff; font-family: "Open Sans", sans-serif; }
.taskbar > div { flex: none; }
.start { width: 54px; padding-left: 7px; padding-top: 6px; }
.find { width: 60px; padding-left: 19px; }
.view { width: 65px; padding-left: 19px; }
.app { width: 59px; height: 48px; margin-right: 3.050px; padding-right: 1.500px; display: flex; align-items: center; justify-content: center; border: 1px solid transparent; }
.app.on { background: #5c594c; border-color: #928f84; }
.app.cur { background: #8b887d; border: 1.500px solid #f0efec; }
.tray { flex: 1 !important; display: flex; align-items: center; height: 50px; font-size: 16px; }
.user { margin-left: 127px; width: 62px; font-size: 14.500px; letter-spacing: -.5px; color: #dad9d4; }
.weather { width: 108px; height: 50px; background: #4a442e; display: flex; align-items: center; padding-left: 15px; gap: 7px; font-size: 18px; letter-spacing: -.7px; }
.icons { display: flex; gap: 10px; margin-left: 15px; }
.icons svg { width: 20px; height: 20px; }
.ln { fill: none; stroke: #eee; stroke-width: 1.300; }
.lang { margin-left: 13px; width: 30px; font-size: 15px; letter-spacing: -.6px; }
.clock { width: 98px; display: flex; flex-direction: column; text-align: center; font-size: 15px; line-height: 23px; letter-spacing: -.55px; }
.note { margin-left: 8px; }
```
